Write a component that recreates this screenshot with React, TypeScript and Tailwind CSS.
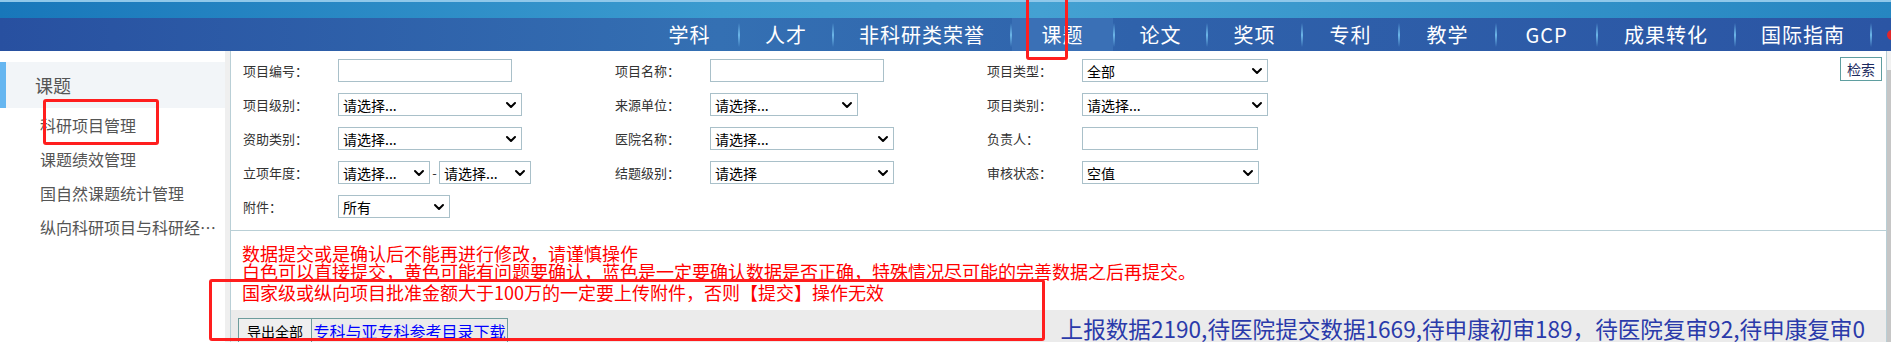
import React from 'react';
import { ChevronDown } from 'lucide-react';

const navItems = [
  { label: '学科', w: 'w-[97px]' },
  { label: '人才', w: 'w-[92px]' },
  { label: '非科研类荣誉', w: 'w-[176px]' },
  { label: '课题', w: 'w-[101px]', active: true },
  { label: '论文', w: 'w-[91px]' },
  { label: '奖项', w: 'w-[93px]' },
  { label: '专利', w: 'w-[95px]' },
  { label: '教学', w: 'w-[95px]' },
  { label: 'GCP', w: 'w-[99px]' },
  { label: '成果转化', w: 'w-[136px]' },
  { label: '国际指南', w: 'w-[134px]' },
];

const menu = ['科研项目管理', '课题绩效管理', '国自然课题统计管理', '纵向科研项目与科研经费管理'];

const Select: React.FC<{ text: string; w: string }> = ({ text, w }) => (
  <div className={`${w} h-[23px] shrink-0 border border-[#a9c0c9] bg-white flex items-center justify-between pl-[4px] pr-[2px] text-[14px] leading-none text-black`}>
    <span>{text}</span>
    <ChevronDown className="w-[16px] h-[16px]" strokeWidth={3} />
  </div>
);

const TextInput: React.FC<{ w: string }> = ({ w }) => (
  <div className={`${w} h-[23px] shrink-0 border border-[#a9c0c9] bg-white`} />
);

const Field: React.FC<{ label: string; children: React.ReactNode }> = ({ label, children }) => (
  <div className="w-[372px] flex items-center">
    <span className="w-[95px] shrink-0 text-[13px] text-[#333]">{label}</span>
    {children}
  </div>
);

const Header: React.FC = () => (
  <div className="h-[51px] shrink-0 flex flex-col">
    <div className="h-[18px] border-t-2 border-[#8fc8ea] bg-[linear-gradient(90deg,#1877ba_0%,#3b9bcf_38%,#44a1d2_55%,#2686c1_100%)]" />
    <div className="h-[33px] flex items-stretch pl-[641px] bg-[linear-gradient(90deg,#2850a0_0%,#3470b3_38%,#2f62ab_60%,#2b55a4_100%)]">
      {navItems.map((item) => (
        <React.Fragment key={item.label}>
          <div
            className={`${item.w} shrink-0 flex items-center justify-center text-[20px] tracking-[1px] text-white ${item.active ? 'bg-[#3a70b6]' : ''}`}
          >
            {item.label}
          </div>
          <div className="w-[2px] shrink-0 self-center h-[24px] bg-[linear-gradient(180deg,transparent,#6cb6e8_50%,transparent)]" />
        </React.Fragment>
      ))}
      <div className="ml-[15px] self-center w-[10px] h-[10px] shrink-0 rounded-full bg-[#e0262a]" />
    </div>
  </div>
);

const Sidebar: React.FC = () => (
  <div className="w-[225px] shrink-0 pt-[11px] bg-white">
    <div className="h-[46px] flex items-center border-l-[6px] border-[#66b6f0] bg-[#f2f5f8] pl-[29px] text-[18px] text-[#555]">
      课题
    </div>
    {menu.map((m) => (
      <div key={m} className="h-[34px] flex items-center pl-[40px] pr-[6px] text-[16px] text-[#555]">
        <span className="truncate">{m}</span>
      </div>
    ))}
  </div>
);

export default function App() {
  return (
    <div className="relative w-[1891px] h-[342px] overflow-hidden bg-white flex flex-col font-['Noto_Sans_CJK_SC','Microsoft_YaHei',sans-serif]">
      <Header />
      <div className="flex flex-1 min-h-0">
        <Sidebar />
        <div className="w-[5px] shrink-0 bg-[#efefef]" />
        <div className="flex-1 min-w-0 flex flex-col border-l border-r border-[#b9cfd6]">
          {/* search form */}
          <div className="h-[180px] shrink-0 flex border-b border-[#b9cfd6] pl-[12px] pt-[6px]">
            <div className="flex-1 flex flex-col gap-[11px] pt-[2px]">
              <div className="flex h-[23px]">
                <Field label="项目编号："><TextInput w="w-[174px]" /></Field>
                <Field label="项目名称："><TextInput w="w-[174px]" /></Field>
                <Field label="项目类型："><Select text="全部" w="w-[186px]" /></Field>
              </div>
              <div className="flex h-[23px]">
                <Field label="项目级别："><Select text="请选择..." w="w-[184px]" /></Field>
                <Field label="来源单位："><Select text="请选择..." w="w-[148px]" /></Field>
                <Field label="项目类别："><Select text="请选择..." w="w-[186px]" /></Field>
              </div>
              <div className="flex h-[23px]">
                <Field label="资助类别："><Select text="请选择..." w="w-[184px]" /></Field>
                <Field label="医院名称："><Select text="请选择..." w="w-[184px]" /></Field>
                <Field label="负责人："><TextInput w="w-[176px]" /></Field>
              </div>
              <div className="flex h-[23px]">
                <Field label="立项年度：">
                  <Select text="请选择..." w="w-[92px]" />
                  <span className="w-[9px] text-center text-[13px] text-[#333]">-</span>
                  <Select text="请选择..." w="w-[92px]" />
                </Field>
                <Field label="结题级别："><Select text="请选择" w="w-[184px]" /></Field>
                <Field label="审核状态："><Select text="空值" w="w-[177px]" /></Field>
              </div>
              <div className="flex h-[23px]">
                <Field label="附件："><Select text="所有" w="w-[112px]" /></Field>
              </div>
            </div>
            <button className="self-start mr-[4px] h-[24px] px-[6px] border border-[#5f9ea0] bg-white text-[14px] leading-none text-[#1c2a5e]">
              检索
            </button>
          </div>

          {/* notice */}
          <div className="h-[79px] shrink-0 pl-[11px] pt-[13px] text-[18px] leading-[18px] text-[#ff0000]">
            <div>数据提交或是确认后不能再进行修改，请谨慎操作</div>
            <div>白色可以直接提交，黄色可能有问题要确认，蓝色是一定要确认数据是否正确，特殊情况尽可能的完善数据之后再提交。</div>
            <div className="mt-[3px]">国家级或纵向项目批准金额大于100万的一定要上传附件，否则【提交】操作无效</div>
          </div>

          {/* bottom bar */}
          <div className="flex-1 flex items-start bg-[#ebebeb] pl-[7px] pt-[8px]">
            <button className="w-[74px] h-[26px] border border-[#6d9c9c] bg-[#efefef] text-[14px] leading-none text-black">
              导出全部
            </button>
            <div className="w-[196px] h-[26px] border border-l-0 border-[#6d9c9c] flex items-center justify-center">
              <a className="text-[16px] leading-none text-[#0000ff] underline">专科与亚专科参考目录下载</a>
            </div>
            <div className="ml-auto pr-[21px] -mt-[2px] text-[22.6px] leading-[26px] text-[#2a3aaa]">
              上报数据2190,待医院提交数据1669,待申康初审189，待医院复审92,待申康复审0
            </div>
          </div>
        </div>
        {/* page scrollbar */}
        <div className="w-[4px] shrink-0 bg-[#f1f1f1] flex flex-col">
          <div className="mt-[19px] flex-1 bg-[#c6c6c6]" />
        </div>
      </div>

      {/* red annotation boxes */}
      <div className="absolute left-[1026px] top-[-4px] w-[42px] h-[64px] border-[3px] border-[#ff1e1e] rounded-[3px]" />
      <div className="absolute left-[43px] top-[99px] w-[116px] h-[46px] border-[3px] border-[#ff1e1e] rounded-[3px]" />
      <div className="absolute left-[209px] top-[279px] w-[836px] h-[62px] border-[3px] border-[#ff1e1e] rounded-[3px]" />
    </div>
  );
}
